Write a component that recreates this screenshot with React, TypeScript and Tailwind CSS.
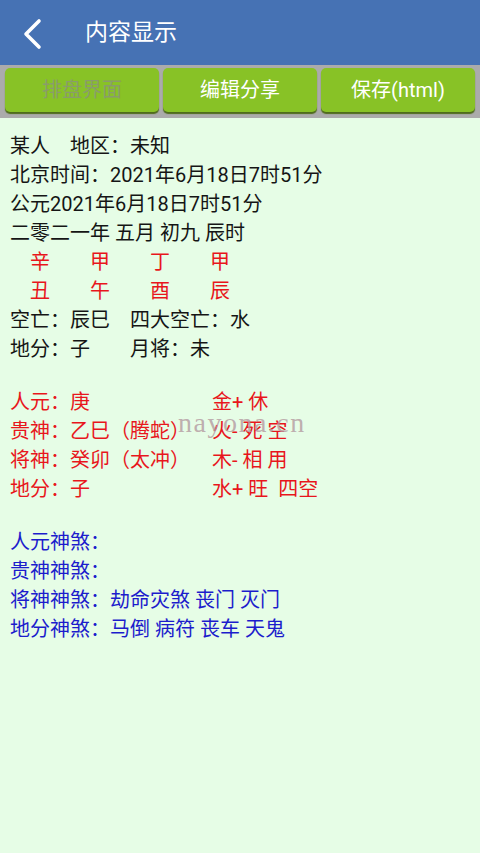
import React from "react";

const font = { fontFamily: '"Roboto", "Noto Sans CJK SC", sans-serif' };

function BackIcon() {
  return (
    <svg width="22" height="32" viewBox="0 0 22 32" fill="none">
      <path
        d="M18 3 L5 16 L18 29"
        stroke="white"
        strokeWidth="3.6"
        strokeLinecap="round"
        strokeLinejoin="round"
      />
    </svg>
  );
}

function TopButton({ label, disabled }: { label: string; disabled?: boolean }) {
  return (
    <button
      className={
        "flex-1 h-[44px] rounded-[5px] bg-[#88c226] shadow-[0_2px_1px_#4f6b1c] flex items-center justify-center text-[20px] " +
        (disabled ? "text-[#8a9c6a]" : "text-white")
      }
    >
      {label}
    </button>
  );
}

function Row({ left, right }: { left: string; right: string }) {
  return (
    <div className="flex">
      <div className="w-[202px] whitespace-pre">{left}</div>
      <div className="whitespace-pre">{right}</div>
    </div>
  );
}

export default function App() {
  return (
    <div className="w-[480px] h-[853px] flex flex-col bg-[#e6fde6]" style={font}>
      <div className="h-[65px] bg-[#4672b4] flex items-center shrink-0">
        <div className="pl-[21px] pt-[2px]">
          <BackIcon />
        </div>
        <div className="ml-[42px] text-white text-[23px] leading-none">内容显示</div>
      </div>

      <div className="bg-[#ababab] flex gap-[4px] px-[5px] pt-[3px] pb-[6px] shrink-0">
        <TopButton label="排盘界面" disabled />
        <TopButton label="编辑分享" />
        <TopButton label="保存(html)" />
      </div>

      <div className="relative flex-1 px-[10px] pt-[14px] text-[20px] leading-[29px] text-[#151515]">
        <div className="whitespace-pre">某人　地区：未知</div>
        <div>北京时间：2021年6月18日7时51分</div>
        <div>公元2021年6月18日7时51分</div>
        <div>二零二一年 五月 初九 辰时</div>
        <div className="whitespace-pre text-[#e8161c]">　辛　　甲　　丁　　甲</div>
        <div className="whitespace-pre text-[#e8161c]">　丑　　午　　酉　　辰</div>
        <div className="whitespace-pre">空亡：辰巳　四大空亡：水</div>
        <div className="whitespace-pre">地分：子　　月将：未</div>

        <div className="mt-[24px] text-[#e8161c]">
          <Row left="人元：庚" right="金+ 休" />
          <Row left="贵神：乙巳（腾蛇）" right="火- 死 空" />
          <Row left="将神：癸卯（太冲）" right="木- 相 用" />
          <Row left="地分：子" right="水+ 旺  四空" />
        </div>

        <div className="mt-[24px] text-[#1c1ccc]">
          <div>人元神煞：</div>
          <div>贵神神煞：</div>
          <div>将神神煞：劫命灾煞 丧门 灭门</div>
          <div>地分神煞：马倒 病符 丧车 天鬼</div>
        </div>

        <div
          className="absolute left-[178px] top-[291px] text-[28px] leading-none text-[#b49aa0]/80 pointer-events-none tracking-[1.5px]"
          style={{ fontFamily: '"Liberation Serif", serif' }}
        >
          nayona.cn
        </div>
      </div>
    </div>
  );
}
